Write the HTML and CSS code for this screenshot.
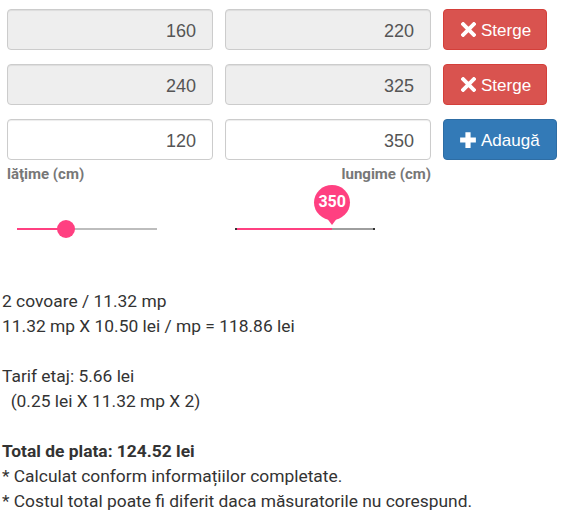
FILE: index.html
```html
<!DOCTYPE html>
<html lang="ro">
<head>
  <meta charset="UTF-8">
  <meta name="viewport" content="width=device-width, initial-scale=1.0">
  <title>Calculator covoare</title>
  <link rel="stylesheet" href="styles.css">
</head>
<body>
  <div class="calc">
    <!-- covoare adaugate -->
    <div class="row">
      <input class="field" type="text" value="160" disabled>
      <input class="field" type="text" value="220" disabled>
      <button class="btn btn-danger">
        <svg class="icon" viewBox="0 0 14 14"><path d="M2 2 L12 12 M12 2 L2 12" stroke="#fff" stroke-width="3.6" stroke-linecap="square"/></svg>Sterge
      </button>
    </div>
    <div class="row">
      <input class="field" type="text" value="240" disabled>
      <input class="field" type="text" value="325" disabled>
      <button class="btn btn-danger">
        <svg class="icon" viewBox="0 0 14 14"><path d="M2 2 L12 12 M12 2 L2 12" stroke="#fff" stroke-width="3.6" stroke-linecap="square"/></svg>Sterge
      </button>
    </div>

    <!-- covor nou -->
    <div class="row last">
      <input class="field" type="text" value="120">
      <input class="field" type="text" value="350">
      <button class="btn btn-primary">
        <svg class="icon plus" viewBox="0 0 16 16"><path d="M8 1 V15 M1 8 H15" stroke="#fff" stroke-width="4.6"/></svg>Adaugă
      </button>
    </div>
    <div class="labels">
      <span class="lbl">lăţime (cm)</span>
      <span class="lbl lbl-right">lungime (cm)</span>
    </div>

    <div class="sliders">
      <div class="slider-col">
        <div class="slider">
          <div class="fill" style="width: 35%"></div>
          <div class="thumb" style="left: 35%"></div>
        </div>
      </div>
      <div class="slider-col">
        <div class="slider active">
          <div class="fill" style="width: 70%"></div>
          <div class="pin" style="left: 70%">350</div>
        </div>
      </div>
    </div>
  </div>

  <div class="result">
    2 covoare / 11.32 mp<br>
    11.32 mp X 10.50 lei / mp = 118.86 lei<br>
    <br>
    Tarif etaj: 5.66 lei<br>
    &nbsp;&nbsp;(0.25 lei X 11.32 mp X 2)<br>
    <br>
    <b>Total de plata: 124.52 lei</b><br>
    * Calculat conform informațiilor completate.<br>
    * Costul total poate fi diferit daca măsuratorile nu corespund.
  </div>
</body>
</html>
```

FILE: styles.css
```css
body {
  margin: 0;
  background-color: #fff;
  font-family: Roboto, "Liberation Sans", sans-serif;
  color: #333;
}

.calc {
  padding: 9px 0 0 7px;
}

.row {
  display: flex;
  gap: 12px;
  margin-bottom: 14px;
}

.row.last {
  margin-bottom: 0;
}

.field {
  box-sizing: border-box;
  width: 206px;
  height: 41px;
  padding: 9px 16px 6px;
  border: 1px solid #ccc;
  border-radius: 4px;
  background-color: #fff;
  box-shadow: inset 0 1px 1px rgba(0, 0, 0, 0.075);
  font-family: "Liberation Sans", Arial, sans-serif;
  font-size: 18px;
  color: #555;
  text-align: right;
}

.field:disabled {
  background-color: #eee;
  color: #555;
}

.btn {
  display: flex;
  align-items: center;
  box-sizing: border-box;
  height: 41px;
  padding: 3px 16px 0 17px;
  border: 1px solid transparent;
  border-radius: 4px;
  font-family: "Liberation Sans", Arial, sans-serif;
  font-size: 17px;
  color: #fff;
  cursor: pointer;
}

.btn-danger {
  width: 104px;
  background-color: #d9534f; /* rosu pentru sterge */
  border-color: #d43f3a;
}

.btn-primary {
  width: 114px;
  padding-left: 15px;
  background-color: #337ab7; /* albastru pentru adauga */
  border-color: #2e6da4;
}

.icon {
  width: 15px;
  height: 15px;
  margin: -3px 5px 0 0;
  flex-shrink: 0;
}

.icon.plus {
  width: 18px;
  height: 18px;
  margin-right: 4px;
}

.labels {
  display: flex;
  width: 424px;
  justify-content: space-between;
  line-height: 20px;
  margin-top: 4px;
}

.lbl {
  font-size: 15px;
  font-weight: bold;
  color: #777;
}

.sliders {
  display: flex;
  gap: 12px;
  margin-top: 44px;
}

.slider-col {
  width: 206px;
  padding-left: 10px;
  box-sizing: border-box;
}

.slider {
  position: relative;
  width: 140px;
  height: 2px;
  background-color: #bdbdbd;
}

.slider.active {
  background-color: #9e9e9e;
  border-left: 2px solid #333;
  border-right: 2px solid #333;
  width: 136px;
}

.fill {
  height: 2px;
  background-color: #ff4081;
}

.thumb {
  position: absolute;
  top: -8px;
  width: 18px;
  height: 18px;
  margin-left: -9px;
  border-radius: 50%;
  background-color: #ff4081;
}

.pin {
  position: absolute;
  top: -43px;
  width: 36px;
  height: 35px;
  margin-left: -18px;
  border-radius: 50%;
  background-color: #ff4081;
  color: #fff;
  font-size: 16px;
  font-weight: bold;
  line-height: 33px;
  text-align: center;
}

.pin::after {
  content: "";
  position: absolute;
  left: 12px;
  bottom: -5px;
  border-left: 6px solid transparent;
  border-right: 6px solid transparent;
  border-top: 8px solid #ff4081;
}

.result {
  margin-top: 59px;
  padding-left: 2px;
  font-size: 17.4px;
  line-height: 25px;
}
```
